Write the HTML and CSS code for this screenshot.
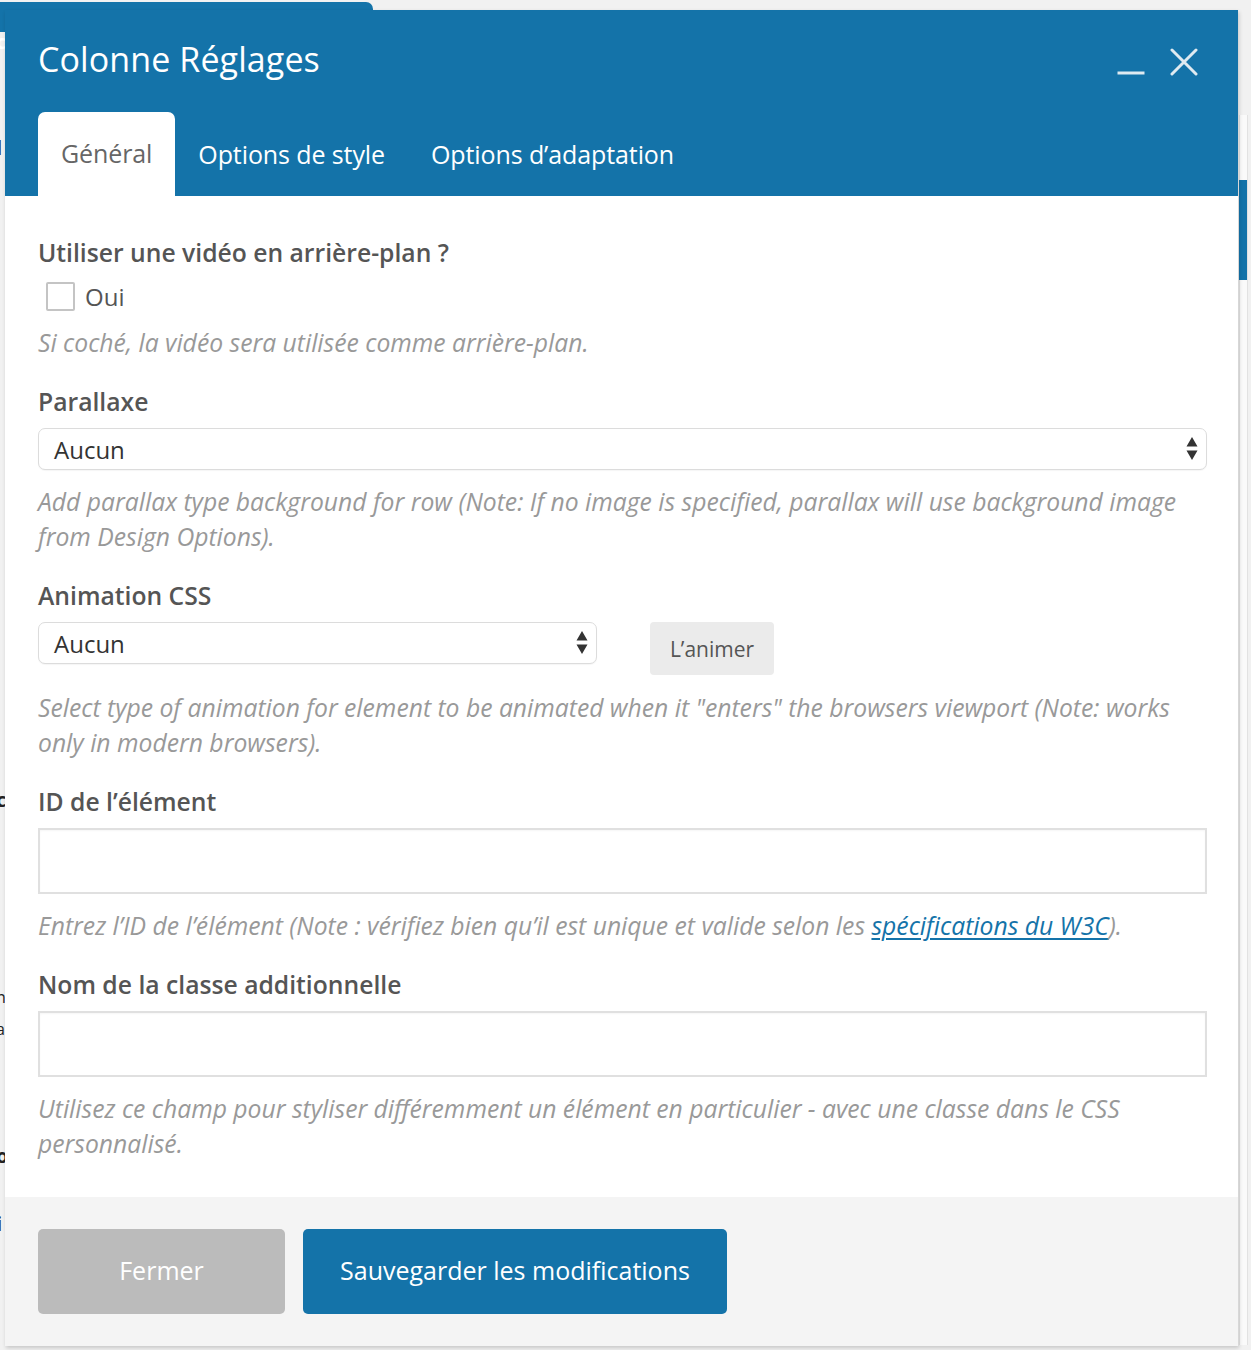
FILE: index.html
```html
<!DOCTYPE html>
<html lang="fr">
<head>
<meta charset="utf-8">
<title>Colonne Réglages</title>
<link rel="stylesheet" href="styles.css">
</head>
<body>
<div class="backdrop">
  <div class="bg-tab"></div>
  <div class="bg-panel-right"></div>
  <div class="bg-band-right"></div>
  <div class="bg-frag bg-frag-1">c</div>
  <div class="bg-frag bg-frag-2">l</div>
  <div class="bg-frag bg-frag-3">c</div>
  <div class="bg-frag bg-frag-4">n</div>
  <div class="bg-frag bg-frag-5">a</div>
  <div class="bg-frag bg-frag-6">o</div>
  <div class="bg-frag bg-frag-7">i</div>
</div>

<div class="modal">
  <header class="modal-header">
    <div class="title-row">
      <h1 class="title">Colonne Réglages</h1>
      <div class="controls">
        <svg class="ctrl ctrl-min" width="28" height="28" viewBox="0 0 28 28"><line x1="0.5" y1="25" x2="27.5" y2="25" stroke="#dfeaf1" stroke-width="3"/></svg>
        <svg class="ctrl ctrl-close" width="28" height="28" viewBox="0 0 28 28"><path d="M2 2 L26 26 M26 2 L2 26" stroke="#dfeaf1" stroke-width="3" fill="none" stroke-linecap="round"/></svg>
      </div>
    </div>
    <nav class="tabs">
      <span class="tab active">Général</span>
      <span class="tab">Options de style</span>
      <span class="tab">Options d’adaptation</span>
    </nav>
  </header>

  <section class="modal-body">
    <div class="field field-check">
      <div class="label">Utiliser une vidéo en arrière-plan ?</div>
      <label class="check-row"><span class="checkbox"></span><span class="check-text">Oui</span></label>
      <p class="desc desc-check">Si coché, la vidéo sera utilisée comme arrière-plan.</p>
    </div>

    <div class="field">
      <div class="label">Parallaxe</div>
      <div class="select select-full">
        <span class="select-value">Aucun</span>
        <svg class="arrows" width="12" height="26" viewBox="0 0 12 26"><path d="M6 1 L11.5 10.5 L0.5 10.5 Z M0.5 14.5 L11.5 14.5 L6 24 Z" fill="#333"/></svg>
      </div>
      <p class="desc">Add parallax type background for row (Note: If no image is specified, parallax will use background image from Design Options).</p>
    </div>

    <div class="field">
      <div class="label">Animation CSS</div>
      <div class="anim-row">
        <div class="select select-half">
          <span class="select-value">Aucun</span>
          <svg class="arrows" width="12" height="26" viewBox="0 0 12 26"><path d="M6 1 L11.5 10.5 L0.5 10.5 Z M0.5 14.5 L11.5 14.5 L6 24 Z" fill="#333"/></svg>
        </div>
        <button class="btn-anim">L’animer</button>
      </div>
      <p class="desc desc-anim">Select type of animation for element to be animated when it "enters" the browsers viewport (Note: works only in modern browsers).</p>
    </div>

    <div class="field">
      <div class="label">ID de l’élément</div>
      <div class="input"></div>
      <p class="desc">Entrez l’ID de l’élément (Note : vérifiez bien qu’il est unique et valide selon les <a class="link" href="#">spécifications du W3C</a>).</p>
    </div>

    <div class="field field-last">
      <div class="label">Nom de la classe additionnelle</div>
      <div class="input"></div>
      <p class="desc">Utilisez ce champ pour styliser différemment un élément en particulier - avec une classe dans le CSS personnalisé.</p>
    </div>
  </section>

  <footer class="modal-footer">
    <button class="btn btn-close">Fermer</button>
    <button class="btn btn-save">Sauvegarder les modifications</button>
  </footer>
</div>
</body>
</html>
```

FILE: styles.css
```css
* { box-sizing: border-box; }

html, body {
  margin: 0;
  padding: 0;
}

body {
  width: 1251px;
  height: 1350px;
  overflow: hidden;
  background: #f1f1f1;
  font-family: "Open Sans", "Noto Sans", sans-serif;
  position: relative;
}

/* ---------- background (admin page behind the modal) ---------- */
.backdrop {
  position: absolute;
  inset: 0;
  z-index: 0;
}
.bg-tab {
  position: absolute;
  left: 0;
  top: 2px;
  width: 373px;
  height: 30px;
  background: #1473a9;
  border-top-right-radius: 7px;
}
.bg-panel-right {
  position: absolute;
  left: 1239px;
  top: 115px;
  width: 9px;
  height: 1230px;
  background: #fafafa;
  border-left: 1px solid #e2e2e2;
  border-right: 1px solid #e2e2e2;
}
.bg-band-right {
  position: absolute;
  left: 1239px;
  top: 180px;
  width: 8px;
  height: 100px;
  background: #1473a9;
}
.bg-frag {
  position: absolute;
  left: -4px;
  font-family: "Open Sans", sans-serif;
  font-weight: 700;
  font-size: 20px;
  color: #222;
}
.bg-frag-1 { top: 28px; color: #fff; }
.bg-frag-2 { top: 134px; }
.bg-frag-3 { top: 786px; }
.bg-frag-4 { top: 986px; font-weight: 400; font-size: 16px; }
.bg-frag-5 { top: 1018px; font-weight: 400; font-size: 16px; }
.bg-frag-6 { top: 1142px; }
.bg-frag-7 { top: 1210px; }

/* ---------- modal ---------- */
.modal {
  position: relative;
  z-index: 1;
  margin: 10px 0 0 5px;
  width: 1233px;
  background: #fff;
  box-shadow: 1px 2px 4px rgba(0, 0, 0, 0.18);
}

.modal-header {
  background: #1473a9;
  color: #fff;
  padding: 0 0 0 33px;
  height: 186px;
}

.title-row {
  display: flex;
  align-items: flex-start;
  justify-content: space-between;
  padding-top: 28px;
  height: 102px;
}

.title {
  margin: 0;
  font-size: 34px;
  line-height: 42px;
  font-weight: 400;
  letter-spacing: 0.1px;
}

.controls {
  display: flex;
  align-items: flex-start;
  gap: 25px;
  padding-right: 40px;
  padding-top: 10px;
}
.ctrl { display: block; }

.tabs {
  display: flex;
  height: 84px;
  align-items: stretch;
}
.tab {
  display: flex;
  align-items: center;
  padding: 0 23px;
  font-size: 25px;
  color: #fff;
  letter-spacing: -0.1px;
}
.tab.active {
  background: #fff;
  color: #666;
  border-radius: 7px 7px 0 0;
  padding-bottom: 2px;
}

/* ---------- body ---------- */
.modal-body {
  padding: 40px 32px 36px 33px;
}

.field {
  margin-bottom: 25px;
}
.field-last { margin-bottom: 0; }

.label {
  font-size: 24.7px;
  line-height: 34px;
  font-weight: 600;
  color: #555;
  margin-bottom: 9px;
}

.field-check .label { margin-bottom: 11px; }

.check-row {
  display: flex;
  align-items: center;
  gap: 10px;
  height: 30px;
  padding-left: 8px;
}
.checkbox {
  width: 29px;
  height: 29px;
  border: 2px solid #c4c4c4;
  border-radius: 2px;
  background: #fff;
}
.check-text {
  font-size: 24px;
  color: #555;
}

.desc {
  margin: 14px 0 0;
  font-size: 24.7px;
  line-height: 35px;
  font-style: italic;
  color: #999;
  padding-right: 20px;
}
.desc-check { margin-top: 14px; }
.desc-anim { margin-top: 15px; }

.select {
  display: flex;
  align-items: center;
  justify-content: space-between;
  height: 42px;
  border: 1.5px solid #dcdcdc;
  border-radius: 7px;
  background: #fff;
  padding: 0 8px 0 15px;
  box-shadow: 0 1px 1px rgba(0,0,0,0.04);
}
.select-value {
  font-size: 24px;
  color: #333;
}
.select-full { width: 1169px; }
.select-half { width: 559px; }

.anim-row {
  display: flex;
  align-items: flex-start;
  gap: 53px;
}

.btn-anim {
  height: 53px;
  width: 124px;
  border: none;
  border-radius: 4px;
  background: #ebebeb;
  color: #555;
  font-family: "Open Sans", sans-serif;
  font-size: 21px;
  padding: 0;
  margin-top: 0;
}

.input {
  width: 1169px;
  height: 66px;
  border: 2px solid #e0e0e0;
  background: #fff;
  box-shadow: inset 0 1px 2px rgba(0,0,0,0.04);
}

.link {
  color: #1473a9;
  text-decoration: underline;
  text-underline-offset: 3px;
  text-decoration-thickness: 1.5px;
}

/* ---------- footer ---------- */
.modal-footer {
  background: #f4f4f4;
  padding: 32px 33px 32px;
  display: flex;
  gap: 18px;
}

.btn {
  height: 85px;
  border: none;
  border-radius: 5px;
  color: #fff;
  font-family: "Open Sans", sans-serif;
  font-size: 25px;
  padding: 0 0 4px;
}
.btn-close {
  width: 247px;
  background: #bbbbbb;
}
.btn-save {
  width: 424px;
  background: #1473a9;
}
```
